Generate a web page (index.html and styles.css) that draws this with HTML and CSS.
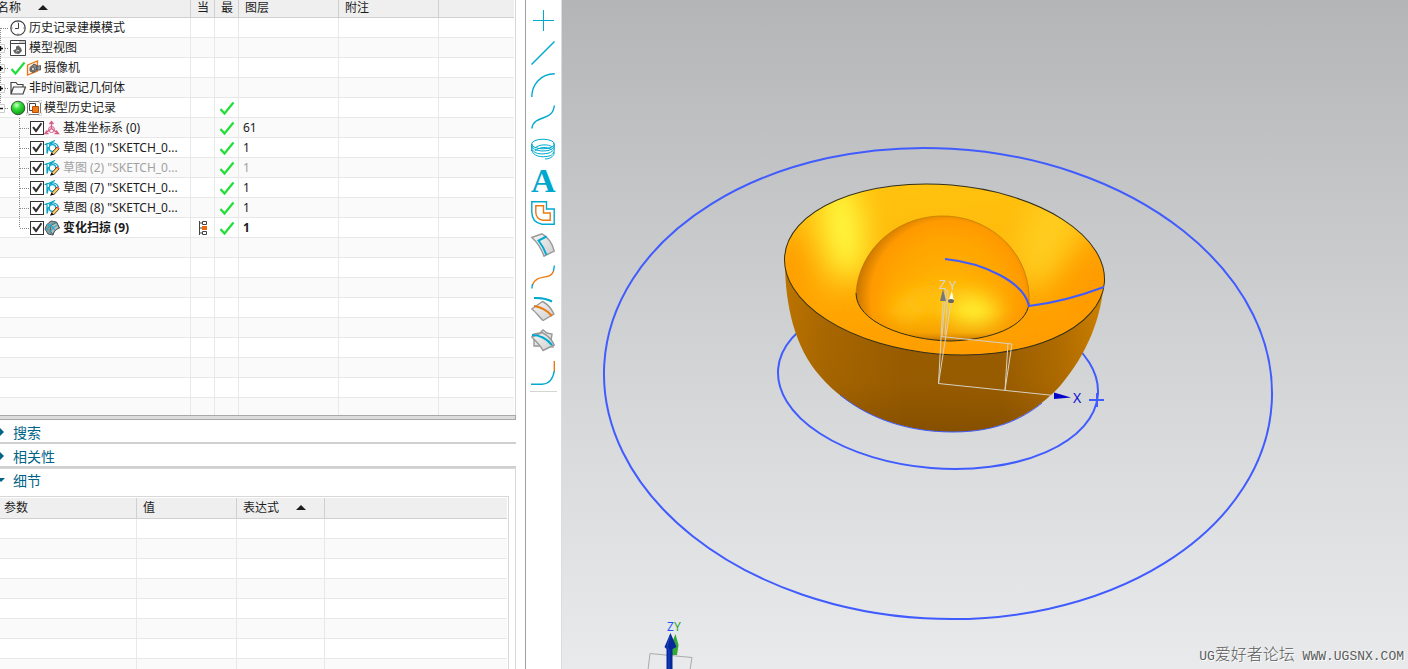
FILE: index.html
```html
<!DOCTYPE html>
<html lang="zh-CN">
<head>
<meta charset="utf-8">
<title>部件导航器</title>
<link rel="stylesheet" href="styles.css">
</head>
<body>
<svg class="defs" aria-hidden="true">
  <defs>
    <radialGradient id="ball" cx="40%" cy="30%" r="70%"><stop offset="0" stop-color="#d8ffd8"/><stop offset=".4" stop-color="#35e135"/><stop offset="1" stop-color="#0b9a18"/></radialGradient>
    <linearGradient id="sheet" x1="0" y1="0" x2="1" y2="1"><stop offset="0" stop-color="#f6f6f6"/><stop offset="1" stop-color="#cfcfcf"/></linearGradient>
  </defs>
  <symbol id="tick" viewBox="0 0 16 16"><path d="M1.500 9 5.500 13.500 14.500 2.500" fill="none" stroke="#20df38" stroke-width="2.200"/></symbol>
  <symbol id="lead" viewBox="0 0 9 20"><path d="M.5 0V20M1 10.500H9" fill="none" stroke="#888" stroke-dasharray="1 1"/></symbol>
  <symbol id="lead-first" viewBox="0 0 9 20"><path d="M.5 10V20M1 10.500H9" fill="none" stroke="#888" stroke-dasharray="1 1"/></symbol>
  <symbol id="lead-plus" viewBox="0 0 9 20"><path d="M.5 0V20M5 10.500H9" fill="none" stroke="#888" stroke-dasharray="1 1"/><path d="M-4 6.500H4.500V14.500H-4" fill="#fff" stroke="#ccc"/><path d="M-2 10.500H3M.5 8V13" stroke="#111" stroke-width="1.500"/></symbol>
  <symbol id="lead-minus" viewBox="0 0 9 20"><path d="M.5 0V6M5 10.500H9" fill="none" stroke="#888" stroke-dasharray="1 1"/><path d="M-4 6.500H4.500V14.500H-4" fill="#fff" stroke="#ccc"/><path d="M-2 10.500H3" stroke="#111" stroke-width="1.500"/></symbol>
  <symbol id="branch" viewBox="0 0 29 20"><path d="M19.500 0V20M20 10.500H29" fill="none" stroke="#888" stroke-dasharray="1 1"/></symbol>
  <symbol id="branch-last" viewBox="0 0 29 20"><path d="M19.500 0V10M20 10.500H29" fill="none" stroke="#888" stroke-dasharray="1 1"/></symbol>
  <symbol id="clock" viewBox="0 0 16 16"><circle cx="8" cy="8" r="7.200" fill="#fff" stroke="#444" stroke-width="1.200"/><path d="M8.500 3V8.500H5M8 1.500v1M8 13.500v1M1.500 8h1M13.500 8h1" fill="none" stroke="#444"/></symbol>
  <symbol id="views" viewBox="0 0 16 16"><path d="M.5.5H15.500V15.500H.5z" fill="#fff" stroke="#444"/><path d="M1 3.500H15" stroke="#444"/><path d="M9.500 2h1M11.500 2h1M13.500 2h1" stroke="#444"/><path d="M3 10.500 6 9V6.500L8.500 5.500 11 8 12 11 9 14 5 13.500z" fill="#666"/><path d="M6 11.500 8 10 9 11" fill="none" stroke="#ddd"/></symbol>
  <symbol id="camera" viewBox="0 0 16 16"><path d="M1.500 5 11.500 1V11L1.500 15z" fill="#fff0e2" stroke="#e87817" stroke-width="1.300"/><path d="M4 7.500 8 4 11 5.500V10L7 12.500 4 11z" fill="#888" stroke="#444" stroke-width=".8"/><path d="M11 6.500 14.500 5.500V10L11 10z" fill="#999" stroke="#444" stroke-width=".8"/><ellipse cx="7" cy="9" rx="1.500" ry="2" fill="#ddd" stroke="#444" stroke-width=".8"/></symbol>
  <symbol id="folder" viewBox="0 0 16 16"><path d="M1 14V2.500H6L7.500 4.500H13V7M1 14 3.500 7H15.500L13 14z" fill="none" stroke="#444" stroke-width="1.200"/></symbol>
  <symbol id="green" viewBox="0 0 16 16"><circle cx="8" cy="8" r="6.800" fill="url(#ball)" stroke="#333" stroke-width=".8"/></symbol>
  <symbol id="history" viewBox="0 0 16 16"><path d="M1.500 1.500H14.500V14.500H1.500z" fill="none" stroke="#777"/><path d="M0 0h3v3H0zM13 0h3v3h-3zM0 13h3v3H0zM13 13h3v3h-3z" fill="#fff" stroke="#999" stroke-width=".5"/><path d="M3.500 3.500H9.500V10.500H3.500z" fill="#fff" stroke="#444"/><path d="M6.500 6.500H12.500V12.500H6.500z" fill="#f07a17" stroke="#b94d00"/></symbol>
  <symbol id="csys" viewBox="0 0 16 16"><path d="M7.500 9V2M7.500 8.500 2 12.500M7.500 8.500 13 12.500M5.500 4 7.500 1.500 9.500 4" fill="none" stroke="#d65b86" stroke-width="1.300"/><circle cx="7.500" cy="9.500" r="3" fill="none" stroke="#d65b86"/><path d="M3 10.500 1 13.500H4.500M12 10.500 14.500 13.500H10.500" fill="none" stroke="#d65b86" stroke-width="1.300"/></symbol>
  <symbol id="sketch" viewBox="0 0 16 16"><path d="M.5 4.500C4 4 8 2 11 .5M3 3V13.500C4 11 4 9 4.500 7M5 5C8 2 12 2 14.500 7" fill="none" stroke="#08a4c4" stroke-width="1.200"/><circle cx="8.500" cy="8" r="3.300" fill="none" stroke="#08a4c4" stroke-width="1.300"/><path d="M7.500 13 13 7 15 9 9.500 15z" fill="#ffca5a" stroke="#222" stroke-width=".8"/><path d="M12.500 7.500 13.500 6.300 15.700 8.500 14.500 9.600z" fill="#dc4c35"/><path d="M6 15.800 7.500 12.500 9.800 14.800z" fill="#111"/></symbol>
  <symbol id="sweep" viewBox="0 0 16 16"><path d="M1 9C2 5 4 3 7 1L12.500 2 15.500 8C12 9 10 11 9 15L4 14z" fill="#9a9a9a" stroke="#444" stroke-width=".9"/><path d="M7.500 5 12.500 2.500 15.300 8C12 9 10 11 9 14.500L6 11z" fill="#bbb" stroke="#444" stroke-width=".8"/><path d="M2.500 11C4 7 7 4 11 2.500M2.500 5C6 4.500 9 6.500 10.500 10M6 14C7 9 9 7 13.500 5" fill="none" stroke="#20aed0" stroke-width="1.100"/></symbol>
  <symbol id="nodes" viewBox="0 0 10 16"><path d="M1.500 1V15M1.500 3H5M1.500 8H5M1.500 13H5" stroke="#444"/><path d="M4.500 1.500H8.500V4.500H4.500zM4.500 11.500H8.500V14.500H4.500z" fill="#fff" stroke="#444"/><path d="M4 6H9V10H4z" fill="#ea6a12"/></symbol>
</svg>
<main class="app">
  <aside class="navigator">
    <section class="tree">
      <table class="grid">
        <colgroup><col class="c-name"><col class="c-flag"><col class="c-flag"><col class="c-wide"><col class="c-wide"><col></colgroup>
        <thead><tr><th class="clip">名称<i class="sort"></i></th><th>当</th><th>最</th><th>图层</th><th>附注</th><th></th></tr></thead>
        <tbody>
          <tr><td><div class="node"><svg class="lead"><use href="#lead-first"/></svg><svg class="icon"><use href="#clock"/></svg><span>历史记录建模模式</span></div></td><td></td><td></td><td></td><td></td><td></td></tr>
          <tr><td><div class="node"><button class="expander" aria-label="展开"><svg class="lead"><use href="#lead-plus"/></svg></button><svg class="icon"><use href="#views"/></svg><span>模型视图</span></div></td><td></td><td></td><td></td><td></td><td></td></tr>
          <tr><td><div class="node"><button class="expander" aria-label="展开"><svg class="lead"><use href="#lead-plus"/></svg></button><svg class="icon"><use href="#tick"/></svg><svg class="icon second"><use href="#camera"/></svg><span>摄像机</span></div></td><td></td><td></td><td></td><td></td><td></td></tr>
          <tr><td><div class="node"><button class="expander" aria-label="展开"><svg class="lead"><use href="#lead-plus"/></svg></button><svg class="icon"><use href="#folder"/></svg><span>非时间戳记几何体</span></div></td><td></td><td></td><td></td><td></td><td></td></tr>
          <tr><td><div class="node"><button class="expander" aria-label="折叠"><svg class="lead"><use href="#lead-minus"/></svg></button><svg class="icon"><use href="#green"/></svg><svg class="icon second"><use href="#history"/></svg><span>模型历史记录</span></div></td><td></td><td><svg class="icon"><use href="#tick"/></svg></td><td></td><td></td><td></td></tr>
          <tr><td><div class="node"><svg class="branch"><use href="#branch"/></svg><input type="checkbox" id="f0" checked><svg class="icon"><use href="#csys"/></svg><label for="f0">基准坐标系 (0)</label></div></td><td></td><td><svg class="icon"><use href="#tick"/></svg></td><td>61</td><td></td><td></td></tr>
          <tr><td><div class="node"><svg class="branch"><use href="#branch"/></svg><input type="checkbox" id="f1" checked><svg class="icon"><use href="#sketch"/></svg><label for="f1">草图 (1) "SKETCH_0...</label></div></td><td></td><td><svg class="icon"><use href="#tick"/></svg></td><td>1</td><td></td><td></td></tr>
          <tr class="inactive"><td><div class="node"><svg class="branch"><use href="#branch"/></svg><input type="checkbox" id="f2" checked><svg class="icon"><use href="#sketch"/></svg><label for="f2">草图 (2) "SKETCH_0...</label></div></td><td></td><td><svg class="icon"><use href="#tick"/></svg></td><td>1</td><td></td><td></td></tr>
          <tr><td><div class="node"><svg class="branch"><use href="#branch"/></svg><input type="checkbox" id="f7" checked><svg class="icon"><use href="#sketch"/></svg><label for="f7">草图 (7) "SKETCH_0...</label></div></td><td></td><td><svg class="icon"><use href="#tick"/></svg></td><td>1</td><td></td><td></td></tr>
          <tr><td><div class="node"><svg class="branch"><use href="#branch"/></svg><input type="checkbox" id="f8" checked><svg class="icon"><use href="#sketch"/></svg><label for="f8">草图 (8) "SKETCH_0...</label></div></td><td></td><td><svg class="icon"><use href="#tick"/></svg></td><td>1</td><td></td><td></td></tr>
          <tr class="current"><td><div class="node"><svg class="branch"><use href="#branch-last"/></svg><input type="checkbox" id="f9" checked><svg class="icon"><use href="#sweep"/></svg><label for="f9">变化扫掠 (9)</label></div></td><td><svg class="icon"><use href="#nodes"/></svg></td><td><svg class="icon"><use href="#tick"/></svg></td><td>1</td><td></td><td></td></tr>
          <tr><td></td><td></td><td></td><td></td><td></td><td></td></tr>
          <tr><td></td><td></td><td></td><td></td><td></td><td></td></tr>
          <tr><td></td><td></td><td></td><td></td><td></td><td></td></tr>
          <tr><td></td><td></td><td></td><td></td><td></td><td></td></tr>
          <tr><td></td><td></td><td></td><td></td><td></td><td></td></tr>
          <tr><td></td><td></td><td></td><td></td><td></td><td></td></tr>
          <tr><td></td><td></td><td></td><td></td><td></td><td></td></tr>
          <tr><td></td><td></td><td></td><td></td><td></td><td></td></tr>
          <tr><td></td><td></td><td></td><td></td><td></td><td></td></tr>
        </tbody>
      </table>
    </section>
    <div class="splitter"></div>
    <section class="panels">
      <button class="panel-head"><i class="arrow right"></i>搜索</button>
      <button class="panel-head"><i class="arrow right"></i>相关性</button>
      <div class="details">
        <button class="panel-head open"><i class="arrow down"></i>细节</button>
        <div class="details-box">
          <table class="grid tall">
            <colgroup><col class="d-name"><col class="d-value"><col class="d-expr"><col></colgroup>
            <thead><tr><th>参数</th><th>值</th><th>表达式<i class="sort"></i></th><th></th></tr></thead>
            <tbody>
              <tr><td></td><td></td><td></td><td></td></tr>
              <tr><td></td><td></td><td></td><td></td></tr>
              <tr><td></td><td></td><td></td><td></td></tr>
              <tr><td></td><td></td><td></td><td></td></tr>
              <tr><td></td><td></td><td></td><td></td></tr>
              <tr><td></td><td></td><td></td><td></td></tr>
              <tr><td></td><td></td><td></td><td></td></tr>
              <tr><td></td><td></td><td></td><td></td></tr>
            </tbody>
          </table>
        </div>
      </div>
    </section>
  </aside>

  <nav class="toolbar" aria-label="曲线">
    <button aria-label="点"><svg viewBox="0 0 24 24"><path d="M12.500 1V22M2 11.500H23" class="cy thin"/></svg></button>
    <button aria-label="直线"><svg viewBox="0 0 24 24"><path d="M.5 23.500 23.500.5" class="cy"/></svg></button>
    <button aria-label="圆弧"><svg viewBox="0 0 24 24"><path d="M.8 24C.8 12 9 1 23.800.8" class="cy"/></svg></button>
    <button aria-label="样条"><svg viewBox="0 0 24 24"><path d="M.8 23.500C3 9 22 17 23.300.5" class="cy"/></svg></button>
    <button aria-label="螺旋线"><svg viewBox="0 0 24 24"><g class="cy thin"><ellipse cx="12" cy="7" rx="11.300" ry="4.800"/><path d="M.7 7C0 13 9 15 17 13.500 23 12 25 8 22 6M.7 10C1 17 10 18 18 16 23 14 24 11 23 8M.7 13C2 19 10 21 18 19 22 18 24 15 23 11M14 22C20 22 24 18 23 15M4 11C8 7 18 7 21 10M4 14C8 10 16 9 21 13M.7 7V14"/></g></svg></button>
    <button aria-label="文本" class="letter">A</button>
    <button aria-label="偏置曲线"><svg viewBox="0 0 24 24"><path d="M.8.8H15.500V8H23.200V23.200H11C4 22 .8 18 .8 11z" class="cy"/><path d="M4.800 4.800H12.500V12H19.200V19.200H12C7 18.500 4.800 15 4.800 11z" class="or"/></svg></button>
    <button aria-label="面中曲线"><svg viewBox="0 0 24 24"><path d="M.8 4.500 11 .8C17 4 21 9 23.200 18L13 23.200C10 15 6 9 .8 4.500z" class="surface"/><path d="M15.500 3.500 7.500 7.500C11 12 13 15 15.500 22" class="cy thick"/></svg></button>
    <button aria-label="桥接曲线"><svg viewBox="0 0 24 24"><path d="M1.500 20C5 8 20 16 22.500 6" class="or"/><path d="M.8 23.500 1.500 19M22.500 6 23.400.5" class="cy"/></svg></button>
    <button aria-label="投影曲线"><svg viewBox="0 0 24 24"><path d="M3 1C10 .8 16 2 21 4.500" class="cy thick"/><path d="M.8 12 11.500 4.500C17 7 20 11 23 17L12 23.500C8 20 5 15 .8 12z" class="surface"/><path d="M3 9C10 10 16 13 21 19" class="or thick"/></svg></button>
    <button aria-label="相交曲线"><svg viewBox="0 0 24 24"><path d="M3 5 9 4 12 1 16 4 21 5 20 12 22 18 14 17H3V11z" class="surface"/><path d="M.8 8 11 3.500C16 6 21 11 23.200 16L12 21.500C9 16 5 12 .8 8z" class="surface"/><path d="M1 6C9 6 16 10 21 16" class="cy thick"/></svg></button>
    <button aria-label="圆角曲线"><svg viewBox="0 0 24 24"><path d="M23.300 0V11" class="or"/><path d="M23.300 10C22 18 18 23 11 23.300H0" class="cy"/></svg></button>
    <hr>
  </nav>

  <section class="viewport" aria-label="模型视图">
    <svg class="scene" viewBox="562 0 846 669" preserveAspectRatio="xMidYMid slice">
      <defs>
        <linearGradient id="bodyX" x1="785" x2="1104" y1="0" y2="0" gradientUnits="userSpaceOnUse"><stop offset="0" stop-color="#bc7400"/><stop offset=".13" stop-color="#aa6800"/><stop offset=".38" stop-color="#9a5d00"/><stop offset=".68" stop-color="#9b5e00"/><stop offset=".86" stop-color="#b36e00"/><stop offset="1" stop-color="#ce8100"/></linearGradient>
        <linearGradient id="bodyY" x1="0" x2="0" y1="290" y2="432" gradientUnits="userSpaceOnUse"><stop offset="0" stop-color="#7d4900" stop-opacity="0"/><stop offset=".65" stop-color="#7d4900" stop-opacity=".12"/><stop offset="1" stop-color="#704200" stop-opacity=".5"/></linearGradient>
        <linearGradient id="rim" x1="930" x2="955" y1="184" y2="355" gradientUnits="userSpaceOnUse"><stop offset="0" stop-color="#ffc20e"/><stop offset=".4" stop-color="#ffba0c"/><stop offset=".65" stop-color="#ffa602"/><stop offset="1" stop-color="#ff9d00"/></linearGradient>
        <radialGradient id="dome" cx="948" cy="298" r="92" gradientUnits="userSpaceOnUse"><stop offset="0" stop-color="#ffb406"/><stop offset=".6" stop-color="#ffa600"/><stop offset=".84" stop-color="#ff9a00"/><stop offset="1" stop-color="#c87500"/></radialGradient>
        <linearGradient id="domeBottom" x1="0" x2="0" y1="312" y2="341" gradientUnits="userSpaceOnUse"><stop offset="0" stop-color="#e08700" stop-opacity="0"/><stop offset=".7" stop-color="#e08700" stop-opacity=".25"/><stop offset="1" stop-color="#b46b00" stop-opacity=".9"/></linearGradient>
        <filter id="soft" x="-100%" y="-100%" width="300%" height="300%"><feGaussianBlur stdDeviation="14"/></filter>
        <filter id="softer" x="-150%" y="-200%" width="400%" height="500%"><feGaussianBlur stdDeviation="11"/></filter>
        <clipPath id="rimClip"><ellipse cx="944.500" cy="269.500" rx="160.400" ry="84.700" transform="rotate(4.800 944.500 269.500)"/></clipPath>
        <clipPath id="domeClip"><path d="M856 293A86.500 82 0 0 1 1029 303C1027 327 990 340 950 341 905 340 856 322 856 293z"/></clipPath>
      </defs>
      <g class="curve">
        <ellipse cx="938" cy="383.500" rx="334.300" ry="235.200" transform="rotate(3.300 938 383.500)"/>
        <ellipse cx="938" cy="382" rx="160.400" ry="86.300" transform="rotate(4.700 938 382)"/>
        <path d="M1089 400H1104M1097 393V407"/>
      </g>
      <path d="M785 262C785 305 795 348 820 376 849 410 897 432 953 432 1010 432 1041 406 1060 386 1088 353 1101 318 1104 282z" fill="url(#bodyX)"/>
      <path d="M785 262C785 305 795 348 820 376 849 410 897 432 953 432 1010 432 1041 406 1060 386 1088 353 1101 318 1104 282z" fill="url(#bodyY)"/>
      <path d="M840 395C870 419 908 432 953 432 996 432 1022 419 1042 403" class="curve slim"/>
      <g clip-path="url(#rimClip)">
        <path d="M780 180H1110V360H780z" fill="url(#rim)"/>
        <ellipse cx="788" cy="285" rx="26" ry="55" fill="#ff9f00" filter="url(#soft)"/>
        <ellipse cx="843" cy="228" rx="20" ry="50" transform="rotate(-8 843 228)" fill="#fff83c" filter="url(#soft)"/>
        <ellipse cx="1046" cy="238" rx="26" ry="55" transform="rotate(22 1046 238)" fill="#ffd024" filter="url(#soft)" opacity=".85"/>
        <ellipse cx="1096" cy="285" rx="24" ry="55" transform="rotate(22 1096 285)" fill="#ff9c00" filter="url(#soft)"/>
      </g>
      <ellipse cx="944.500" cy="269.500" rx="160.400" ry="84.700" transform="rotate(4.800 944.500 269.500)" class="edge"/>
      <g clip-path="url(#domeClip)">
        <path d="M850 210H1035V345H850z" fill="url(#dome)"/>
        <ellipse cx="940" cy="300" rx="42" ry="14" fill="#ffc010" filter="url(#softer)"/>
        <ellipse cx="907" cy="311" rx="17" ry="9" fill="#ffcc18" filter="url(#softer)"/>
        <ellipse cx="974" cy="312" rx="24" ry="15" fill="#fff636" filter="url(#softer)"/>
        <path d="M850 300H1035V345H850z" fill="url(#domeBottom)"/>
      </g>
      <path d="M856 293C856 322 905 340 950 341 990 340 1027 327 1029 303" class="edge"/>
      <path d="M856 293A86.500 82 0 0 1 1029 303" class="edge faint"/>
      <path d="M945 259C984 263 1024 282 1029 306 1055 303 1080 296 1104 287" class="curve"/>
      <g class="datum">
        <path d="M1054 395.500 938.500 383.500 943 302M938.500 383.500 951 303M942 336 946 290M941 336.500 1012 344 1005 390 1008 343M945 335 948 291 944 289"/>
        <text x="939" y="289">Z</text><text x="949" y="290">Y</text>
      </g>
      <path d="M943 289 940 301H946z" fill="#777"/><path d="M952 291 948 302H954z" fill="#fff"/><ellipse cx="951" cy="301" rx="3" ry="2" fill="#666"/>
      <path d="M1054 392.500 1071 397.500 1054 399z" fill="#0404c8"/>
      <text x="1073" y="403" class="axis x">X</text>
      <g>
        <path d="M648 670 650 653.500 692 657.500 690 670" fill="none" stroke="#aaa"/>
        <path d="M675.500 634 678.500 645 677 655H672L671 645z" fill="#35a835"/>
        <path d="M670.500 633 676.500 647 672.500 649V670H666.500V649L664.500 647z" fill="#06289a"/>
        <path d="M670 635 667 647 669 650V670" stroke="#1e48c8" fill="none"/>
        <text x="667" y="631" class="axis z">Z</text><text x="674" y="631" class="axis y">Y</text>
      </g>
    </svg>
    <p class="watermark">UG<span>爱好者论坛</span> WWW.UGSNX.COM</p>
  </section>
</main>
</body>
</html>
```

FILE: styles.css
```css
* { box-sizing: border-box; }
html, body { height: 100%; margin: 0; }
body {
  overflow: hidden;
  background: #fff;
  color: #1c1c1c;
  font: 12px/19px "Noto Sans", "Noto Sans CJK SC", sans-serif;
}
button { margin: 0; padding: 0; border: 0; background: none; color: inherit; font: inherit; }
.defs { position: absolute; width: 0; height: 0; }
.app { display: flex; height: 100vh; }

.navigator { display: flex; flex: 0 0 516px; flex-direction: column; min-width: 0; }
.tree { flex: 0 0 62%; overflow: hidden; padding-right: 1px; border-right: 1px solid #d8d8d8; }

.grid { width: 100%; table-layout: fixed; border-collapse: separate; border-spacing: 0; }
.grid th, .grid td { overflow: hidden; padding: 0; border-right: 1px solid #e8e8e8; border-bottom: 1px solid #e8e8e8; text-align: left; white-space: nowrap; }
.grid th { height: 18px; padding: 0 6px 2px; border-color: #d0d0d0; background: #efefef; font-weight: 400; line-height: 15px; }
.grid td { height: 20px; padding-left: 4px; }
.grid td:first-child { padding-left: 0; }
.grid th:last-child, .grid td:last-child { border-right: 0; }
.grid tbody tr:nth-child(even) { background: #fafafa; }
.grid .clip { padding-left: 0; text-indent: -3px; }
.grid .icon { display: block; }
.c-name { width: 191px; }
.c-flag { width: 24px; }
.c-wide { width: 100px; }
.d-name { width: 137px; }
.d-value { width: 100px; }
.d-expr { width: 88px; }

.sort { display: inline-block; margin-left: 17px; border: 5px solid transparent; border-top: 0; border-bottom-color: #1c1c1c; vertical-align: 2px; }

.node { display: flex; align-items: center; height: 19px; }
.lead { display: block; flex: none; width: 9px; height: 20px; }
.branch { flex: none; width: 29px; height: 20px; margin-right: 1px; }
.expander { flex: none; width: 9px; height: 20px; }
.icon { flex: none; width: 16px; height: 16px; }
.lead + .icon, .expander + .icon { margin-left: 1px; }
.node span, .node label { margin-left: 3px; }
.node .second + span { margin-left: 2px; }
.node input { appearance: none; flex: none; width: 14px; height: 14px; margin: 0; border: 1px solid #333; background: #fff; }
.node input:checked::before {
  display: block;
  width: 12px;
  height: 12px;
  background: #333;
  clip-path: polygon(10% 50%, 25% 42%, 42% 65%, 80% 10%, 94% 18%, 46% 90%, 38% 90%);
  content: "";
}
.inactive { color: #a2a2a2; }
.current { font-weight: 700; }

.splitter { flex: none; height: 5px; border: 1px solid #a8a8a8; border-left: 0; background: #dcdcdc; }
.panels { display: flex; flex: 1; flex-direction: column; min-height: 0; overflow: hidden; }
.panel-head { display: flex; flex: none; align-items: center; width: 100%; height: 24px; padding-top: 3px; border-bottom: 2px solid #d0d0d0; color: #006487; font-size: 14px; text-align: left; }
.panel-head.open { height: 27px; padding: 0 0 4px; border: 0; }
.arrow { flex: none; width: 5px; margin-right: 8px; }
.arrow::before { display: block; width: 0; border: 4px solid transparent; content: ""; }
.arrow.right::before { border-left-color: #006487; border-right: 0; }
.arrow.down::before { margin-left: -3px; border-top-color: #006487; border-bottom: 0; }
.details { flex: 1; min-height: 0; border-right: 1px solid #d8d8d8; border-top: 1px solid #d8d8d8; }
.details-box { height: 100%; margin-right: 6px; padding: 1px 1px 0 0; border: 1px solid #d8d8d8; border-left: 0; }
.tall th { height: 21px; padding-bottom: 0; line-height: 20px; }
.tall th:first-child { padding-left: 4px; }

.toolbar { display: flex; flex: 0 0 37px; flex-direction: column; margin-left: 9px; padding-top: 5px; border-right: 1px solid #dcdcdc; border-left: 1px solid #a0a0a0; }
.toolbar button { display: flex; flex: none; align-items: center; height: 32px; padding-left: 5px; }
.toolbar svg { width: 24px; height: 24px; }
.toolbar hr { width: 27px; margin: 2px 4px 0; border: 0; border-top: 1px solid #d4d4d4; }
.toolbar .letter { color: #00a7cf; font: 700 34px/32px "Liberation Serif", serif; }
.cy, .or { fill: none; stroke: #00a9cf; stroke-width: 1.4; }
.or { stroke: #e97a10; }
.thin { stroke-width: 1; }
.thick { stroke-width: 2; }
.surface { fill: url(#sheet); stroke: #999; stroke-width: 1.4; }

.viewport { position: relative; flex: 1; min-width: 0; overflow: hidden; background: linear-gradient(#b4b5b6, #c7c8c9 33%, #d9dadc 66%, #e8eaeb); }
.scene { display: block; width: 100%; height: 100%; }
.curve { fill: none; stroke: #405cff; stroke-width: 2; }
.slim { stroke-width: 1; }
.edge { fill: none; stroke: #33301c; stroke-width: 1; }
.faint { stroke: #a86a00; stroke-opacity: .5; }
.datum path { fill: none; stroke: #d6d0c4; }
.datum text { fill: #d8d4cc; font-size: 13px; }
.axis { font-size: 12px; }
.x { fill: #1010d0; font-size: 14px; }
.z { fill: #1c55ff; }
.y { fill: #30a030; }
.watermark { position: absolute; right: 4px; bottom: 2px; margin: 0; color: #5c5c5c; font: 300 13px/20px "Liberation Mono", monospace; text-shadow: 1px 1px #fff; white-space: pre; }
.watermark span { font: 300 16px/20px "Noto Sans CJK SC", sans-serif; }
```
